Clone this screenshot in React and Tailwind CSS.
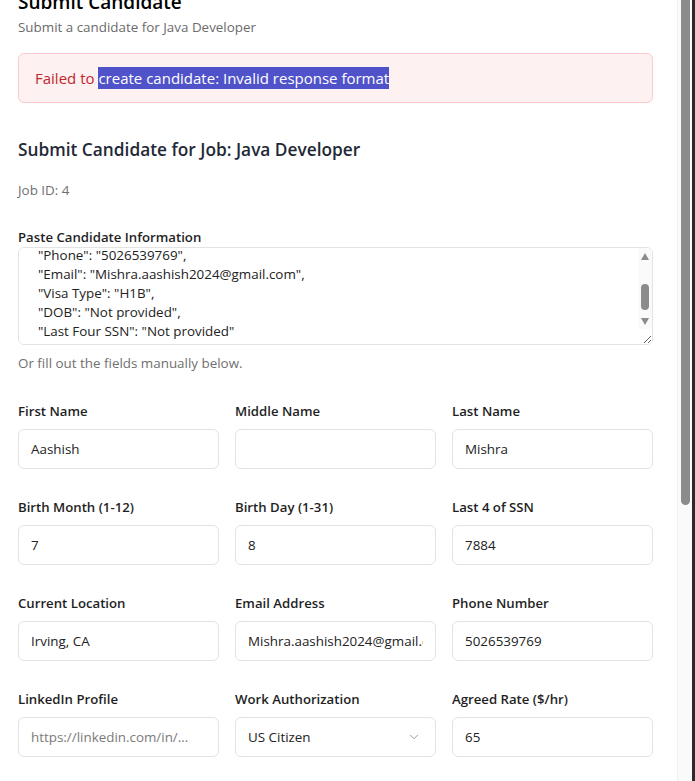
import { useEffect, useRef } from 'react'
import { ChevronDown } from 'lucide-react'

const pasted = `{
  "First Name": "Aashish",
  "Last Name": "Mishra",
  "Location": "Irving, CA",
  "Phone": "5026539769",
  "Email": "Mishra.aashish2024@gmail.com",
  "Visa Type": "H1B",
  "DOB": "Not provided",
  "Last Four SSN": "Not provided"
}`

const fields = [
  { label: 'First Name', value: 'Aashish' },
  { label: 'Middle Name', value: '' },
  { label: 'Last Name', value: 'Mishra' },
  { label: 'Birth Month (1-12)', value: '7' },
  { label: 'Birth Day (1-31)', value: '8' },
  { label: 'Last 4 of SSN', value: '7884' },
  { label: 'Current Location', value: 'Irving, CA' },
  { label: 'Email Address', value: 'Mishra.aashish2024@gmail.com' },
  { label: 'Phone Number', value: '5026539769' },
  { label: 'LinkedIn Profile', value: '', placeholder: 'https://linkedin.com/in/...' },
  { label: 'Work Authorization', select: 'US Citizen' },
  { label: 'Agreed Rate ($/hr)', value: '65' },
]

function Field({ field }) {
  return (
    <div className="flex flex-col">
      <label className="text-[13.2px] leading-5 font-semibold text-[#1f1f1f] mb-2">{field.label}</label>
      {field.select ? (
        <div className="relative h-10 rounded-md border border-[#e3e3e3] bg-white flex items-center px-3 text-[13.4px] text-[#222]">
          <span>{field.select}</span>
          <ChevronDown className="absolute right-[14px] w-3.5 h-3.5 text-[#8a8a8a]" strokeWidth={1.5} />
        </div>
      ) : (
        <input
          readOnly
          defaultValue={field.value}
          placeholder={field.placeholder}
          className="h-10 w-full rounded-md border border-[#e3e3e3] bg-white px-3 text-[13.4px] text-[#222] placeholder:text-[#7a7a7a] outline-none"
        />
      )}
    </div>
  )
}

export default function App() {
  const areaRef = useRef(null)

  useEffect(() => {
    if (areaRef.current) areaRef.current.scrollTop = 86
  }, [])

  return (
    <div className="flex h-[781px] w-[695px] overflow-hidden bg-white" style={{ fontFamily: '"Open Sans", "Noto Sans", sans-serif' }}>
      {/* Dialog content */}
      <div className="flex-1 pl-[18px] pr-6 overflow-hidden">
        <div className="-mt-[12px]">
          <h2 className="text-[19px] leading-7 font-semibold text-black">Submit Candidate</h2>
          <p className="text-[13.4px] leading-5 text-[#6b6b6b] mt-[1px]">Submit a candidate for Java Developer</p>
        </div>

        <div className="mt-4 h-[50px] rounded-md border border-[#fecaca] bg-[#fef1f1] flex items-center px-4 text-[15px] text-[#c0262d]">
          <span>Failed to&nbsp;</span>
          <span className="bg-[#5052c9] text-white">create candidate: Invalid response format</span>
        </div>

        <h3 className="mt-[33px] text-[17.3px] leading-7 font-semibold text-[#1f2937]">Submit Candidate for Job: Java Developer</h3>
        <p className="mt-[16px] text-[13.4px] leading-5 text-[#707070]">Job ID: 4</p>

        <label className="block mt-[27px] text-[13.2px] leading-5 font-semibold text-[#1f1f1f]">Paste Candidate Information</label>
        <div className="relative">
          <textarea
            ref={areaRef}
            readOnly
            defaultValue={pasted}
            className="block w-full h-[98px] rounded-md border border-[#e3e3e3] bg-white px-3 py-2 text-[13.4px] leading-[19px] text-[#222] outline-none overflow-y-scroll [scrollbar-width:none]"
          />
          {/* textarea scrollbar */}
          <div className="absolute right-[1px] top-[1px] bottom-[16px] w-[14px] bg-[#fafafa] rounded-tr-md">
            <svg className="absolute left-[3px] top-[5px]" width="8" height="7" viewBox="0 0 8 7">
              <path d="M4 0 L8 7 L0 7 Z" fill="#8b8b8b" />
            </svg>
            <div className="absolute left-[3px] top-[36px] w-[8px] h-[26px] rounded-full bg-[#8b8b8b]" />
            <svg className="absolute left-[3px] top-[70px]" width="8" height="7" viewBox="0 0 8 7">
              <path d="M0 0 L8 0 L4 7 Z" fill="#8b8b8b" />
            </svg>
          </div>
        </div>
        <p className="mt-2 text-[13.4px] leading-5 text-[#707070]">Or fill out the fields manually below.</p>

        <div className="mt-[28px] grid grid-cols-3 gap-x-4 gap-y-7">
          {fields.map((f) => (
            <Field key={f.label} field={f} />
          ))}
        </div>
      </div>

      {/* Page scrollbar */}
      <div className="w-[15px] bg-[#fafafa] border-l border-[#f0f0f0] flex justify-center">
        <div className="w-[9px] h-[505px] rounded-b-full bg-[#8b8b8b]" />
      </div>
      <div className="w-[3px] bg-[#2b2b2b]" />
    </div>
  )
}
